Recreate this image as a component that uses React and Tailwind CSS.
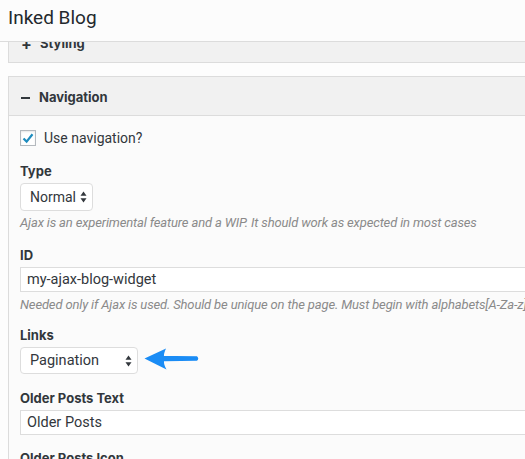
import React from "react";

function SelectArrows() {
  return (
    <svg width="7" height="12" viewBox="0 0 7 12" className="shrink-0">
      <path d="M3.5 0.5 L6.5 4.8 L0.5 4.8 Z" fill="#32373c" />
      <path d="M3.5 11.5 L6.5 7.2 L0.5 7.2 Z" fill="#32373c" />
    </svg>
  );
}

function Label({ children, className = "" }) {
  return (
    <div
      className={"text-[13px] leading-[18px] font-bold text-[#32373c] " + className}
      style={{ fontFamily: "Inter, sans-serif" }}
    >
      {children}
    </div>
  );
}

function Help({ children, className = "" }) {
  return (
    <div className={"text-[13px] leading-[16px] italic text-[#8a8a8a] whitespace-nowrap tracking-[-0.15px] " + className}>
      {children}
    </div>
  );
}

export default function App() {
  return (
    <div
      className="w-[525px] h-[459px] overflow-hidden bg-[#fdfdfd] text-[#32373c]"
      style={{ fontFamily: "Roboto, 'Noto Sans', sans-serif" }}
    >
      <div className="h-[42px] bg-[#fcfcfc] border-b border-[#dcdcdc] px-[8px] flex items-center">
        <div className="text-[19px] leading-none text-[#23282d] -mt-[7px]">Inked Blog</div>
      </div>

      {/* Styling (scrolled under header) */}
      <div className="ml-[8px] w-[600px] h-[21px] overflow-hidden border-l border-b border-[#dcdcdc] bg-[#f1f1f1]">
        <div className="-mt-[17px] h-[38px] flex items-center pl-[12px]" style={{ fontFamily: "Inter, sans-serif" }}>
          <span className="w-[19px] text-[16px] font-bold">+</span>
          <span className="text-[13px] font-bold text-[#32373c]">Styling</span>
        </div>
      </div>

      {/* Navigation */}
      <div className="mt-[13px] ml-[8px] w-[600px] border-l border-t border-[#dcdcdc] bg-[#fbfbfb]">
        <div className="h-[39px] bg-[#f1f1f1] border-b border-[#dcdcdc] flex items-center pl-[12px] pt-[3px]">
          <span className="w-[9px] h-[2px] bg-[#32373c] mr-[9px]" />
          <span className="text-[13px] font-bold text-[#32373c]" style={{ fontFamily: "Inter, sans-serif" }}>Navigation</span>
        </div>

        <div className="pl-[11px] pt-[14px] pb-[20px]">
          <div className="flex items-center h-[16px]">
            <div className="w-[16px] h-[16px] border border-[#b4b9be] bg-white flex items-center justify-center shadow-[inset_0_1px_2px_rgba(0,0,0,0.1)]">
              <svg width="12" height="12" viewBox="0 0 12 12">
                <path d="M1.5 6.5 L4.6 9.6 L10.5 2.2" stroke="#1e8cbe" strokeWidth="2.2" fill="none" />
              </svg>
            </div>
            <span className="ml-[8px] text-[14px] text-[#32373c]">Use navigation?</span>
          </div>

          <Label className="mt-[16px]">Type</Label>
          <div className="mt-[3px] w-[73px] h-[28px] border border-[#dddddd] rounded-[4px] bg-white flex items-center pl-[9px] pr-[5px] justify-between">
            <span className="text-[14px] text-[#32373c]">Normal</span>
            <SelectArrows />
          </div>
          <Help className="mt-[4px]">Ajax is an experimental feature and a WIP. It should work as expected in most cases</Help>

          <Label className="mt-[15px]">ID</Label>
          <div className="mt-[3px] w-[600px] h-[25px] border border-[#dddddd] bg-white flex items-center pl-[6px]">
            <span className="text-[14.5px] text-[#32373c]">my-ajax-blog-widget</span>
          </div>
          <Help className="mt-[5px]">Needed only if Ajax is used. Should be unique on the page. Must begin with alphabets[A-Za-z]</Help>

          <Label className="mt-[13px]">Links</Label>
          <div className="mt-[3px] flex items-center">
            <div className="w-[118px] h-[27px] border border-[#dddddd] rounded-[4px] bg-white flex items-center pl-[9px] pr-[5px] justify-between">
              <span className="text-[14.5px] text-[#32373c]">Pagination</span>
              <SelectArrows />
            </div>
            <svg width="56" height="22" viewBox="0 0 56 22" className="ml-[6px] -mt-[3px]">
              <path d="M0.5 10.5 L22 0.5 Q19.5 6 20 8 Q37 7.8 53 8.2 Q55.5 10.5 53 12.8 Q37 13.2 20 13.2 Q19.5 16 22.5 21.5 Z" fill="#1a8cf5" />
            </svg>
          </div>

          <Label className="mt-[15px]">Older Posts Text</Label>
          <div className="mt-[3px] w-[600px] h-[25px] border border-[#dddddd] bg-white flex items-center pl-[6px]">
            <span className="text-[14.5px] text-[#32373c]">Older Posts</span>
          </div>

          <Label className="mt-[14px]">Older Posts Icon</Label>
        </div>
      </div>
    </div>
  );
}
